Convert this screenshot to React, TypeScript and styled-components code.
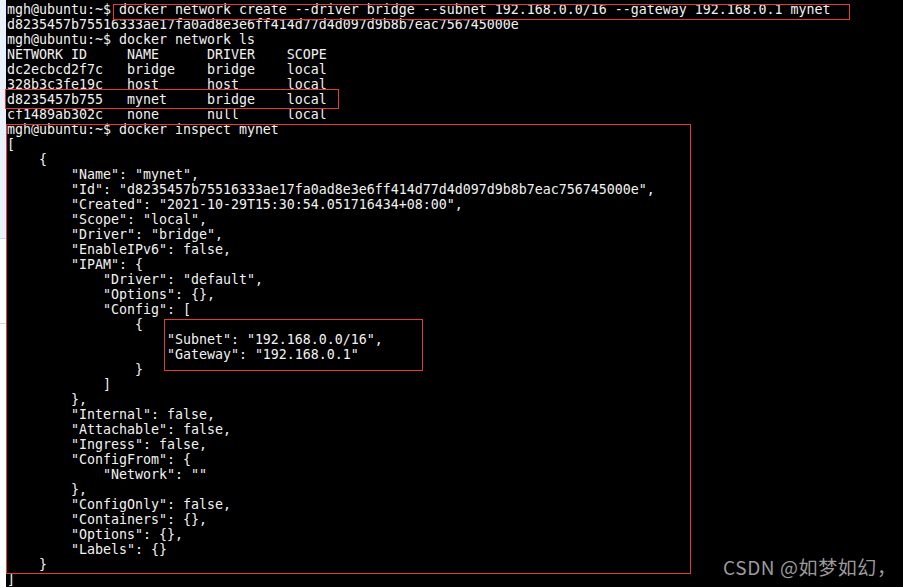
import React from "react";
import styled, { createGlobalStyle } from "styled-components";

const Global = createGlobalStyle`
  html, body { margin: 0; padding: 0; background: #000; }
  body { width: 903px; height: 587px; overflow: hidden; }
`;

const Page = styled.div`
  display: flex;
  width: 903px;
  height: 587px;
  overflow: hidden;
`;

const Backdrop = styled.div`
  width: 6px;
  flex: none;
  display: flex;
  flex-direction: column;
  background: #ffffff;
`;

const BackdropBand = styled.div<{ $h: number; $c: string }>`
  height: ${(p) => p.$h}px;
  background: ${(p) => p.$c};
  border-bottom: 1px solid #d6d9de;
`;

const Terminal = styled.div`
  position: relative;
  flex: 1;
  background: #000;
  padding: 2px 0 0 1px;
`;

const Screen = styled.pre`
  margin: 0;
  font-family: "DejaVu Sans Mono", "Liberation Mono", monospace;
  font-size: 13.29px;
  line-height: 15px;
  color: #f2f2f2;
  white-space: pre;
`;

const Mark = styled.div<{ $l: number; $t: number; $w: number; $h: number }>`
  position: absolute;
  left: ${(p) => p.$l}px;
  top: ${(p) => p.$t}px;
  width: ${(p) => p.$w}px;
  height: ${(p) => p.$h}px;
  border: 1px solid #e53a3a;
  box-sizing: border-box;
  pointer-events: none;
`;

const Watermark = styled.div`
  position: absolute;
  left: 717px;
  top: 556px;
  font-family: "Noto Sans CJK SC", "Noto Sans", sans-serif;
  font-size: 19px;
  line-height: 22px;
  color: #9b9b9b;
  letter-spacing: 0.6px;
  white-space: nowrap;
`;

const lines = [
  "mgh@ubuntu:~$ docker network create --driver bridge --subnet 192.168.0.0/16 --gateway 192.168.0.1 mynet",
  "d8235457b75516333ae17fa0ad8e3e6ff414d77d4d097d9b8b7eac756745000e",
  "mgh@ubuntu:~$ docker network ls",
  "NETWORK ID     NAME      DRIVER    SCOPE",
  "dc2ecbcd2f7c   bridge    bridge    local",
  "328b3c3fe19c   host      host      local",
  "d8235457b755   mynet     bridge    local",
  "cf1489ab302c   none      null      local",
  "mgh@ubuntu:~$ docker inspect mynet",
  "[",
  "    {",
  '        "Name": "mynet",',
  '        "Id": "d8235457b75516333ae17fa0ad8e3e6ff414d77d4d097d9b8b7eac756745000e",',
  '        "Created": "2021-10-29T15:30:54.051716434+08:00",',
  '        "Scope": "local",',
  '        "Driver": "bridge",',
  '        "EnableIPv6": false,',
  '        "IPAM": {',
  '            "Driver": "default",',
  '            "Options": {},',
  '            "Config": [',
  "                {",
  '                    "Subnet": "192.168.0.0/16",',
  '                    "Gateway": "192.168.0.1"',
  "                }",
  "            ]",
  "        },",
  '        "Internal": false,',
  '        "Attachable": false,',
  '        "Ingress": false,',
  '        "ConfigFrom": {',
  '            "Network": ""',
  "        },",
  '        "ConfigOnly": false,',
  '        "Containers": {},',
  '        "Options": {},',
  '        "Labels": {}',
  "    }",
  "]",
];

const marks = [
  { l: 107, t: 4, w: 737, h: 16 },
  { l: -1, t: 89, w: 334, h: 20 },
  { l: 0, t: 124, w: 685, h: 450 },
  { l: 158, t: 319, w: 259, h: 52 },
];

export default function App() {
  return (
    <Page>
      <Global />
      <Backdrop>
        <BackdropBand $h={238} $c="#e9f1fb" />
        <BackdropBand $h={84} $c="#ffffff" />
      </Backdrop>
      <Terminal>
        <Screen>{lines.join("\n")}</Screen>
        {marks.map((m, i) => (
          <Mark key={i} $l={m.l} $t={m.t} $w={m.w} $h={m.h} />
        ))}
        <Watermark>CSDN @如梦如幻，</Watermark>
      </Terminal>
    </Page>
  );
}
